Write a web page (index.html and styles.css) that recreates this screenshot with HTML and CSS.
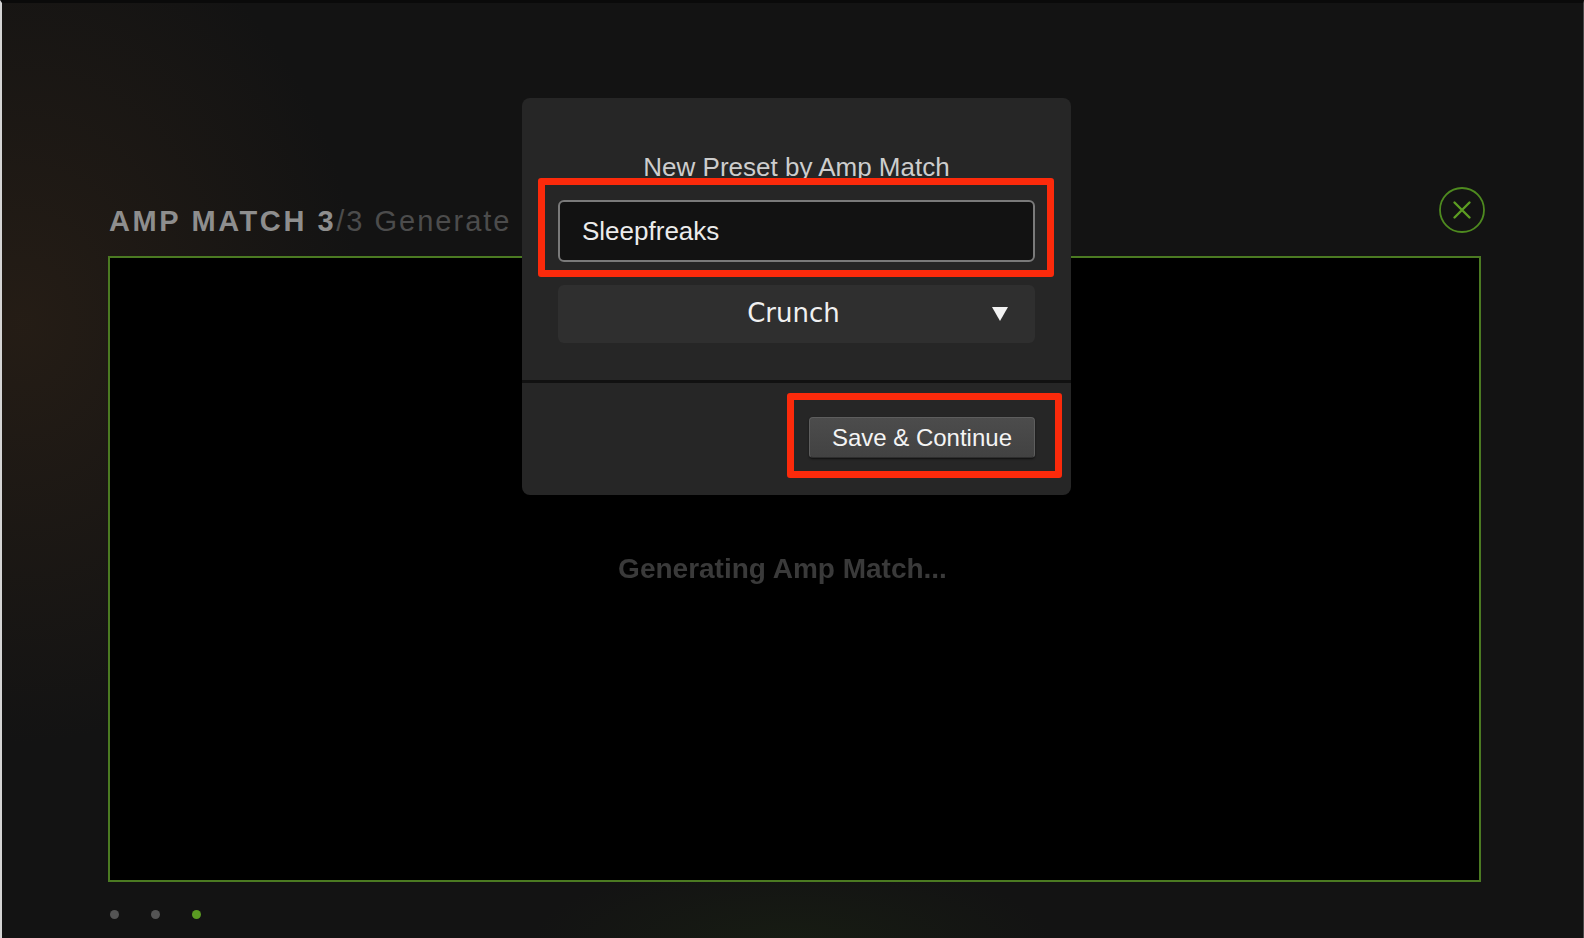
FILE: index.html
```html
<!DOCTYPE html>
<html lang="en">
<head>
  <meta charset="UTF-8">
  <title>Amp Match</title>
  <link rel="stylesheet" href="styles.css">
</head>
<body>
  <div class="screen">
    <div class="header">
      <h1 class="title"><b>AMP MATCH 3</b>/3 Generate</h1>
      <button class="close" title="Close">
        <svg width="46" height="46" viewBox="0 0 46 46">
          <circle cx="23" cy="23" r="22" fill="none" stroke="#4e8a1f" stroke-width="1.8"/>
          <path d="M15.5 15.5 L30.5 30.5 M30.5 15.5 L15.5 30.5" stroke="#5c9c22" stroke-width="2.4" stroke-linecap="round"/>
        </svg>
      </button>
    </div>

    <div class="panel">
      <p class="status">Generating Amp Match...</p>
    </div>

    <div class="dots">
      <span class="dot"></span>
      <span class="dot"></span>
      <span class="dot on"></span>
    </div>

    <div class="modal">
      <div class="modal-body">
        <p class="modal-title">New Preset by Amp Match</p>
        <div class="field">
          <input class="name" type="text" value="Sleepfreaks">
          <span class="mark mark-name"></span>
        </div>
        <div class="select">
          <span>Crunch</span>
          <svg class="arrow" width="16" height="14" viewBox="0 0 16 14">
            <path d="M0 0 H16 L8 14 Z" fill="#f2f2f2"/>
          </svg>
        </div>
      </div>
      <div class="modal-foot">
        <div class="field">
          <button class="save">Save &amp; Continue</button>
          <span class="mark mark-save"></span>
        </div>
      </div>
    </div>
  </div>
</body>
</html>
```

FILE: styles.css
```css
html, body {
  margin: 0;
  padding: 0;
  background: #0f0f0f;
}
.screen {
  position: relative;
  width: 1584px;
  height: 938px;
  box-sizing: border-box;
  border-top: 3px solid #0a0a0a;
  border-left: 2px solid #d4d4d4;
  border-right: 1px solid #4a4a4a;
  padding: 184px 102px 0 106px;
  display: flex;
  flex-direction: column;
  font-family: "Liberation Sans", Arial, sans-serif;
  background:
    radial-gradient(ellipse 340px 420px at 20px 320px, rgba(58, 40, 24, 0.45), rgba(58, 40, 24, 0) 100%),
    radial-gradient(ellipse 260px 80px at 790px 938px, rgba(30, 44, 18, 0.35), rgba(30, 44, 18, 0) 100%),
    #131313;
}

/* title row */
.header {
  display: flex;
  justify-content: space-between;
  align-items: flex-start;
  height: 46px;
  margin-right: -4px;
}
.title {
  margin: 20px 0 0 1px;
  font-size: 29px;
  line-height: 1;
  font-weight: normal;
  letter-spacing: 2px;
  color: #4c4c4c;
}
.title b {
  color: #8e8e8e;
  font-weight: bold;
  letter-spacing: 2.6px;
}
.close {
  width: 46px;
  height: 46px;
  padding: 0;
  border: none;
  background: none;
  cursor: pointer;
}
.close svg {
  display: block;
}

/* main area */
.panel {
  margin-top: 23px;
  height: 626px;
  box-sizing: border-box;
  border: 2px solid #4b7a22;
  background: #000;
  display: flex;
  align-items: center;
  justify-content: center;
  padding-right: 24px;
}
.status {
  margin: 0;
  font-size: 28px;
  font-weight: bold;
  color: #3a3a3a;
  filter: blur(0.6px);
}
.dots {
  display: flex;
  gap: 32px;
  margin: 28px 0 0 2px;
}
.dot {
  width: 9px;
  height: 9px;
  border-radius: 50%;
  background: #545454;
}
.dot.on {
  background: #5a9a22;
}

/* preset dialog */
.modal {
  position: absolute;
  left: 520px;
  top: 95px;
  width: 549px;
  height: 397px;
  border-radius: 8px;
  background: #262626;
  display: flex;
  flex-direction: column;
}
.modal-body {
  padding: 56px 36px 37px;
  border-bottom: 3px solid #111;
  display: flex;
  flex-direction: column;
}
.modal-title {
  margin: 0 0 20px;
  font-size: 26px;
  line-height: 1;
  text-align: center;
  color: #cdcdcd;
}
.field {
  position: relative;
}
.name {
  display: block;
  width: 100%;
  height: 62px;
  box-sizing: border-box;
  padding: 0 22px;
  background: #121212;
  border: 2px solid #7a7a7a;
  border-radius: 6px;
  font-family: "Liberation Sans", Arial, sans-serif;
  font-size: 26px;
  color: #ececec;
  outline: none;
}
.select {
  position: relative;
  margin-top: 23px;
  height: 58px;
  border-radius: 6px;
  background: #2f2f2f;
  display: flex;
  align-items: center;
  justify-content: center;
  font-family: "DejaVu Sans", Verdana, sans-serif;
  font-size: 26px;
  color: #f0f0f0;
  padding-right: 6px;
  padding-bottom: 3px;
  box-sizing: border-box;
}
.arrow {
  position: absolute;
  right: 27px;
  top: 22px;
}
.modal-foot {
  flex: 1;
  display: flex;
  justify-content: flex-end;
  align-items: flex-start;
  padding: 34px 36px 0;
}
.save {
  display: block;
  height: 41px;
  padding: 0 22px;
  border: 1px solid #5e5e5e;
  border-bottom-color: #2e2e2e;
  border-radius: 4px;
  background: linear-gradient(#4c4c4c, #424242);
  box-shadow: 0 1px 2px rgba(0, 0, 0, 0.6);
  font-family: "Liberation Sans", Arial, sans-serif;
  font-size: 24px;
  color: #f4f4f4;
  cursor: pointer;
}

/* red highlight frames drawn over the fields */
.mark {
  position: absolute;
  border: 7px solid #fb2a0b;
  border-radius: 3px;
  pointer-events: none;
}
.mark-name {
  left: -20px;
  right: -19px;
  top: -22px;
  bottom: -15px;
}
.mark-save {
  left: -22px;
  right: -27px;
  top: -24px;
  bottom: -20px;
}
```
